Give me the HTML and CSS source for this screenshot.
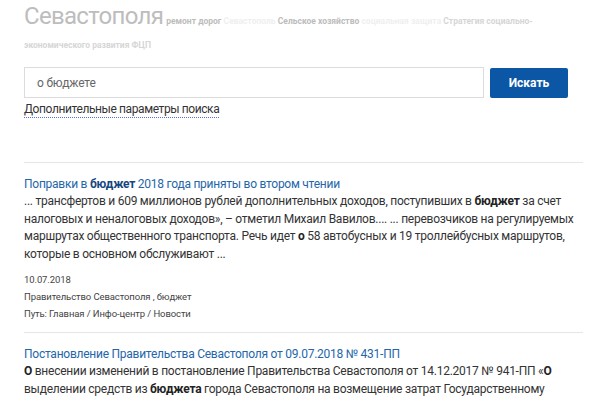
FILE: index.html
```html
<!DOCTYPE html>
<html lang="ru">
<head>
<meta charset="utf-8">
<title>Поиск</title>
<link rel="stylesheet" href="styles.css">
</head>
<body>
<div class="page">
  <div class="cloud">
    <span class="cloud-title">Севастополя</span>
    <a class="tag t-mid">ремонт дорог</a>
    <a class="tag t-faint">Севастополь</a>
    <a class="tag t-mid">Сельское хозяйство</a>
    <a class="tag t-faint">социальная защита</a>
    <a class="tag t-light">Стратегия социально-экономического развития ФЦП</a>
  </div>

  <form class="search">
    <div class="search-row">
      <input class="search-input" type="text" value="о бюджете">
      <button class="search-btn" type="button">Искать</button>
    </div>
    <a class="more-params">Дополнительные параметры поиска</a>
  </form>

  <div class="results">
    <div class="result">
      <a class="result-title">Поправки в <b>бюджет</b> 2018 года приняты во втором чтении</a>
      <p class="snippet">... трансфертов и 609 миллионов рублей дополнительных доходов, поступивших в <b>бюджет</b> за счет налоговых и неналоговых доходов», – отметил Михаил Вавилов.... ... перевозчиков на регулируемых маршрутах общественного транспорта. Речь идет <b>о</b> 58 автобусных и 19 троллейбусных маршрутов, которые в основном обслуживают ...</p>
      <div class="meta first">10.07.2018</div>
      <div class="meta">Правительство Севастополя , бюджет</div>
      <div class="meta">Путь: Главная / Инфо-центр / Новости</div>
    </div>
    <div class="result">
      <a class="result-title">Постановление Правительства Севастополя от 09.07.2018 № 431-ПП</a>
      <p class="snippet"><b>О</b> внесении изменений в постановление Правительства Севастополя от 14.12.2017 № 941-ПП «<b>О</b> выделении средств из <b>бюджета</b> города Севастополя на возмещение затрат Государственному унитарному предприятию</p>
    </div>
  </div>
</div>
</body>
</html>
```

FILE: styles.css
```css
html, body {
  margin: 0;
  padding: 0;
  background: #fff;
}
body {
  font-family: Roboto, "Noto Sans", sans-serif;
  color: #333;
  overflow: hidden;
}
.page {
  padding: 0 17px 0 24px;
}
.cloud {
  line-height: 24px;
  font-size: 8.5px;
  font-weight: 700;
  padding-top: 4px;
  padding-right: 30px;
}
.cloud-title {
  font-size: 24px;
  font-weight: 400;
  letter-spacing: -0.7px;
  color: #bdbdbd;
  margin-right: 1px;
}
.tag { text-decoration: none; }
.t-mid { color: #bcbcbc; }
.t-faint { color: #efefef; }
.t-light { color: #d6d6d6; }

.search {
  margin-top: 10px;
}
.search-row {
  display: flex;
  align-items: flex-start;
  gap: 6px;
}
.search-input {
  box-sizing: border-box;
  width: 460px;
  height: 31px;
  border: 1px solid #dcdcdc;
  padding: 0 12px;
  font-family: inherit;
  font-size: 12px;
  letter-spacing: -0.2px;
  color: #666;
  margin: 0;
  outline: none;
}
.search-btn {
  box-sizing: border-box;
  width: 78px;
  height: 30px;
  margin-top: 1px;
  background: #0b57a6;
  border: 0;
  border-radius: 2px;
  color: #fff;
  font-family: inherit;
  font-weight: 700;
  font-size: 12px;
  cursor: pointer;
}
.more-params {
  display: inline-block;
  font-size: 12px;
  letter-spacing: -0.4px;
  line-height: 15px;
  color: #333;
  text-decoration: none;
  border-bottom: 1px dotted #5a6fd6;
}

.results {
  margin-top: 44px;
}
.result {
  border-top: 1px solid #e6e6e6;
  padding: 13px 0 10px;
}
.result-title {
  display: block;
  font-size: 12px;
  letter-spacing: -0.25px;
  line-height: 17px;
  color: #2466aa;
}
.result-title b { color: #17467f; }
.snippet {
  margin: 0;
  font-size: 12px;
  letter-spacing: -0.25px;
  line-height: 17.5px;
  color: #333;
}
.snippet b { color: #222; }
.meta {
  font-size: 9.5px;
  letter-spacing: -0.1px;
  line-height: 17px;
  color: #444;
}
.meta.first { margin-top: 8px; }
```
